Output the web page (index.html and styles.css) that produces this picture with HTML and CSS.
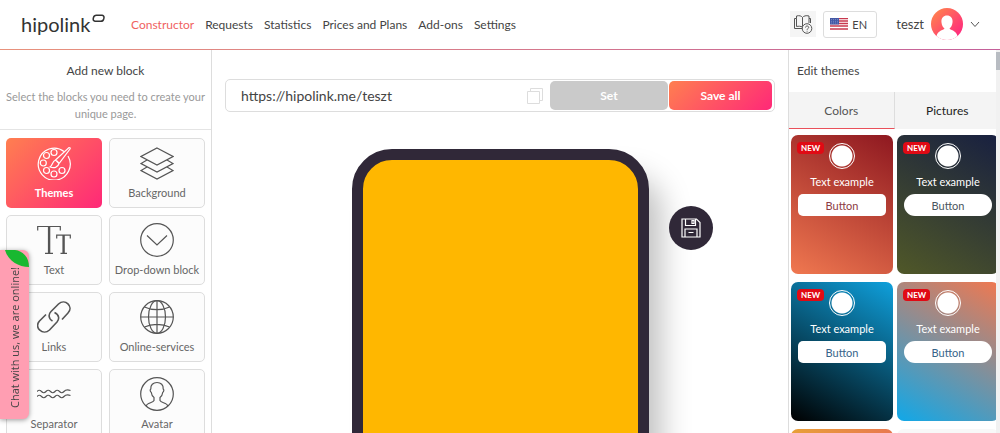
FILE: index.html
```html
<!DOCTYPE html>
<html lang="en">
<head>
    <meta charset="UTF-8">
    <meta name="viewport" content="width=device-width, initial-scale=1.0">
    <title>hipolink - Constructor</title>
    <link rel="stylesheet" href="styles.css">
</head>
<body>

    <header class="header">
        <a href="#" class="logo">hipolink
            <svg width="13" height="9" viewBox="0 0 13 9"><path d="M4.500 1.200H10a2 2 0 0 1 2 2.300l-.3 1.500a3 3 0 0 1-2.900 2.300H3.200a2 2 0 0 1-2-2.300l.3-1.500a3 3 0 0 1 3-2.300z"/></svg>
        </a>
        <nav class="nav">
            <a href="#" class="active">Constructor</a>
            <a href="#">Requests</a>
            <a href="#">Statistics</a>
            <a href="#">Prices and Plans</a>
            <a href="#">Add-ons</a>
            <a href="#">Settings</a>
        </nav>
        <div class="header-right">
            <button class="help" aria-label="Help">
                <svg width="20" height="20" viewBox="0 0 20 20">
                    <path d="M9.500 14.500H1.500V4.500h2V2c3-.8 5 0 6 1.500C10.500 2 13 1.200 16 2v2.500h1.500V9M9.500 3.500v9M3.500 4.500v8c2-.5 4-.3 6 .5M16 4.500V9"/>
                    <circle cx="14" cy="14.500" r="4.800"/>
                    <path d="M12.500 13.500c0-2 3.200-2 3.200 0 0 1.200-1.600 1-1.600 2.200M14.100 16.800v.8"/>
                </svg>
            </button>
            <button class="lang">
                <svg width="18" height="12" viewBox="0 0 18 12">
                    <rect width="18" height="12" fill="#fff"/>
                    <path d="M0 .5h18M0 3h18M0 5.500h18M0 8h18M0 11h18" stroke="#c8384e" stroke-width="1.300"/>
                    <rect width="9" height="6.500" fill="#4358a5"/>
                    <path d="M1 1.500h7M1 3.300h7M1 5h7" stroke="#99a5d2" stroke-width=".6" stroke-dasharray="1 1"/>
                </svg>
                EN
            </button>
            <button class="user">
                teszt
                <svg class="user-pic" width="32" height="32" viewBox="0 0 32 32">
                    <defs>
                        <linearGradient id="userBg" x1="0" y1="0" x2="1" y2="1">
                            <stop offset="0.150" stop-color="#ff7b51"/>
                            <stop offset="0.850" stop-color="#ff2c7c"/>
                        </linearGradient>
                    </defs>
                    <circle cx="16" cy="16" r="16" fill="url(#userBg)"/>
                    <path d="M16 7.500c4 0 6 3 5.500 7-.3 3-1.500 4.800-3 6 .3 1.500 6.500 1.500 8 7.500A16 16 0 0 1 5.500 28c1.500-6 7.700-6 8-7.500-1.500-1.200-2.700-3-3-6-.5-4 1.500-7 5.500-7z" fill="#fff"/>
                </svg>
                <svg width="10" height="7" viewBox="0 0 10 7"><path d="M1 1l4 4.500L9 1"/></svg>
            </button>
        </div>
    </header>

    <main class="layout">

        <!-- Blocks -->
        <aside class="blocks">
            <div class="blocks-head">
                <h2>Add new block</h2>
                <p>Select the blocks you need to create your unique page.</p>
            </div>
            <div class="blocks-grid">
                <button class="block selected">
                    <svg viewBox="0 0 34 34">
                        <path d="M27 5.500A16 16 0 1 0 31 10"/>
                        <circle cx="17" cy="6.500" r="3"/><circle cx="9.500" cy="9.500" r="3"/>
                        <circle cx="6.300" cy="17" r="3"/><circle cx="9.500" cy="24.500" r="3"/>
                        <circle cx="17" cy="28" r="3"/><circle cx="25" cy="24.500" r="3"/>
                        <path d="M18.500 14L32 1.500c1 0 1.500.5 1 1.500L22 17.500zM18.500 14c1.500.5 2.800 1.800 3.500 3.500-1 4-5 5-9 3.500 2.500-1 2-5.500 5.500-7z"/>
                    </svg>
                    Themes
                </button>
                <button class="block">
                    <svg viewBox="0 0 34 34">
                        <path d="M17 2l16 8.500L17 19 1 10.500zM7 14l-6 3.500L17 26l16-8.500-6-3.500M7 21l-6 3.500L17 33l16-8.500-6-3.500"/>
                    </svg>
                    Background
                </button>
                <button class="block">
                    <svg viewBox="0 0 34 34">
                        <path d="M.7 7.500V3.500h22.600v4M11.500 3.500V30M12.700 3.500V30M8 30.300h8M19.700 15.500v-3.300h13.600v3.300M26 12.200V30M27.200 12.200V30M23.500 30.300h6.500"/>
                    </svg>
                    Text
                </button>
                <button class="block">
                    <svg viewBox="0 0 34 34"><circle cx="17" cy="17" r="16.300"/><path d="M7 12.500L17 22l10-9.500"/></svg>
                    Drop-down block
                </button>
                <button class="block">
                    <svg viewBox="0 0 34 34" class="bold">
                        <path d="M15.500 21C11 18.500 11.500 14 14 11.500L21.500 4C28-2 37 6.500 31 13L25 19.500M17.500 12.500C22.500 15 22.500 19 20 22L12.500 30C6 36-3.500 27.500 2.500 21L9 14.500"/>
                    </svg>
                    Links
                </button>
                <button class="block">
                    <svg viewBox="0 0 34 34">
                        <circle cx="17" cy="17" r="16.300"/>
                        <ellipse cx="17" cy="17" rx="8.500" ry="16.300"/>
                        <path d="M17 .7v32.600M.7 17h32.600M4.500 7c7 3.500 18 3.500 25 0M4.500 27c7-3.500 18-3.500 25 0"/>
                    </svg>
                    Online-services
                </button>
                <button class="block">
                    <svg viewBox="0 0 34 34">
                        <path d="M0 14.500q2.200-2.500 4.500 0t4.500 0 4.500 0 4.500 0 4.500 0 4.500 0 6.500-1M0 19.500q2.200-2.500 4.500 0t4.500 0 4.500 0 4.500 0 4.500 0 4.500 0 6.500-1"/>
                    </svg>
                    Separator
                </button>
                <button class="block">
                    <svg viewBox="0 0 34 34">
                        <circle cx="17" cy="17" r="16.300"/>
                        <path d="M6 29c1-3.500 7-3 8-5.500v-3c-2-1.500-2.500-3-2.700-5-1.500-1-1.300-3-.5-3.500C10.500 8 13 5.500 17 5.500S23.500 8 23.200 12c.8.5 1 2.500-.5 3.500-.2 2-.7 3.500-2.700 5v3c1 2.500 7 2 8 5.500"/>
                    </svg>
                    Avatar
                </button>
            </div>
        </aside>

        <!-- Preview -->
        <section class="preview">
            <form class="url-bar">
                <input type="text" value="https://hipolink.me/teszt" aria-label="Page address">
                <button type="button" class="copy" aria-label="Copy">
                    <svg width="16" height="16" viewBox="0 0 16 16"><path d="M.5 3.500h12v12H.5zM3.500 3V.5h12v12H13"/></svg>
                </button>
                <button type="button" class="btn btn-set">Set</button>
                <button type="button" class="btn btn-save">Save all</button>
            </form>
            <div class="stage">
                <div class="phone"></div>
                <button class="save-round" aria-label="Save">
                    <svg width="20" height="20" viewBox="0 0 20 20">
                        <path d="M1 1h14.500L19 4.500V19H1zM4.500 1v6.500h10V1M11 2.500h2v3h-2zM4 19v-8h12v8M7.500 14.500h5"/>
                    </svg>
                </button>
            </div>
        </section>

        <!-- Themes -->
        <aside class="themes">
            <h2>Edit themes</h2>
            <div class="tabs">
                <button class="tab active">Colors</button>
                <button class="tab">Pictures</button>
            </div>
            <div class="themes-grid">
                <div class="theme theme-red">
                    <span class="new">NEW</span>
                    <span class="dot"></span>
                    <p>Text example</p>
                    <button>Button</button>
                </div>
                <div class="theme theme-green round">
                    <span class="new">NEW</span>
                    <span class="dot"></span>
                    <p>Text example</p>
                    <button>Button</button>
                </div>
                <div class="theme theme-blue">
                    <span class="new">NEW</span>
                    <span class="dot"></span>
                    <p>Text example</p>
                    <button>Button</button>
                </div>
                <div class="theme theme-sky round">
                    <span class="new">NEW</span>
                    <span class="dot"></span>
                    <p>Text example</p>
                    <button>Button</button>
                </div>
                <div class="theme theme-orange"></div>
                <div class="theme theme-light"></div>
            </div>
            <div class="scrollbar"></div>
        </aside>

    </main>

    <button class="chat">
        <svg width="24" height="17" viewBox="0 0 24 17"><path d="M0 0h10C18 1 24 7 24 17 14 17 3 11 0 0z"/></svg>
        <span>Chat with us, we are online!</span>
    </button>

</body>
</html>
```
FILE: styles.css
```css
* {
    box-sizing: border-box;
}

body {
    margin: 0;
    height: 100vh;
    display: flex;
    flex-direction: column;
    overflow: hidden;
    font-family: Lato, sans-serif;
    font-size: 12px;
    color: #444;
    background: #fff;
}

h2, p {
    margin: 0;
    font-weight: normal;
}

h2 {
    font-size: 12px;
    line-height: 16px;
}

a {
    color: inherit;
    text-decoration: none;
}

button {
    padding: 0;
    border: none;
    background: none;
    font: inherit;
    color: inherit;
    cursor: pointer;
}

svg {
    fill: none;
    stroke: #555;
    flex-shrink: 0;
}

/* Header */
.header {
    display: flex;
    align-items: center;
    height: 50px;
    flex-shrink: 0;
    padding: 0 20px 2px 21px;
    background: linear-gradient(90deg, #e8927c, #c4609a) bottom / 100% 1px no-repeat;
}

.logo {
    display: flex;
    align-items: center;
    gap: 2px;
    width: 110px;
    font-size: 20px;
    color: #333;
}

.logo svg {
    margin-bottom: 12px;
    stroke: #333;
    stroke-width: 1.5;
}

.nav {
    display: flex;
    gap: 11px;
}

.nav .active {
    color: #f0625f;
}

.header-right {
    display: flex;
    align-items: center;
    margin-left: auto;
}

.help {
    display: flex;
    align-items: center;
    justify-content: center;
    width: 26px;
    height: 26px;
    background: #f5f5f5;
}

.lang {
    display: flex;
    align-items: center;
    gap: 4px;
    width: 54px;
    height: 27px;
    margin: 0 19px 0 7px;
    padding-left: 6px;
    border: 1px solid #ddd;
    border-radius: 3px;
    font-size: 11px;
}

.lang svg,
.user-pic {
    stroke: none;
}

.user {
    display: flex;
    align-items: center;
    gap: 7px;
    font-size: 13px;
}

/* Layout */
.layout {
    flex: 1;
    display: grid;
    grid-template-columns: 212px 1fr 212px;
    grid-template-rows: 100%;
    min-height: 0;
}

.blocks {
    border-right: 1px solid #ddd;
    overflow: hidden;
}

.blocks-head {
    height: 80px;
    padding: 13px 4px 0;
    border-bottom: 1px solid #e4e4e4;
    text-align: center;
}

.blocks-head p {
    margin-top: 9px;
    font-size: 11px;
    line-height: 17px;
    color: #999;
}

.blocks-grid {
    display: grid;
    grid-template-columns: 1fr 1fr;
    gap: 7px;
    padding: 8px 6px;
}

.block {
    display: flex;
    flex-direction: column;
    align-items: center;
    gap: 5px;
    height: 70px;
    padding-top: 7px;
    border: 1px solid #ddd;
    border-radius: 5px;
    background: #fcfcfc;
    font-size: 11px;
    line-height: 16px;
    color: #666;
    white-space: nowrap;
}

.block svg {
    width: 34px;
    height: 34px;
    stroke-width: 1.2;
}

.block svg.bold {
    stroke-width: 1.6;
}

.block.selected {
    border-color: transparent;
    background: linear-gradient(135deg, #ff7f50, #ff2878) border-box;
    color: #fff;
    font-weight: bold;
}

.block.selected svg {
    stroke: #fff;
}

/* Preview */
.preview {
    display: flex;
    flex-direction: column;
    padding: 29px 13px 0;
    min-width: 0;
    overflow: hidden;
}

.url-bar {
    display: flex;
    align-items: center;
    height: 33px;
    flex-shrink: 0;
    padding: 0 2px 0 15px;
    border: 1px solid #ddd;
    border-radius: 5px;
}

.url-bar input {
    flex: 1;
    min-width: 0;
    padding: 0;
    border: none;
    outline: none;
    font: inherit;
    font-size: 14px;
    color: #444;
}

.copy {
    display: flex;
    margin-right: 7px;
}

.copy svg {
    stroke: #ddd;
}

.btn {
    height: 29px;
    border-radius: 5px;
    color: #fff;
    font-weight: bold;
}

.btn-set {
    width: 118px;
    margin-right: 1px;
    background: #cacaca;
}

.btn-save {
    width: 103px;
    background: linear-gradient(135deg, #ff7f50, #ff2878);
}

.stage {
    flex: 1;
    display: grid;
    grid-template-columns: 1fr 297px 1fr;
    margin-top: 37px;
    min-height: 0;
}

.phone {
    grid-column: 2;
    height: 600px;
    border: 11px solid #302838;
    border-radius: 40px;
    background: #ffb700;
    box-shadow: 20px 20px 30px -8px rgba(0, 0, 0, 0.25);
}

.save-round {
    display: flex;
    align-items: center;
    justify-content: center;
    width: 44px;
    height: 44px;
    margin: 57px 0 0 20px;
    border-radius: 50%;
    background: #302838;
    z-index: 1;
}

.save-round svg {
    stroke: #fff;
    stroke-width: 1.2;
}

/* Themes */
.themes {
    position: relative;
    border-left: 1px solid #ddd;
    overflow: hidden;
}

.themes h2 {
    padding: 13px 8px;
}

.tabs {
    display: grid;
    grid-template-columns: 1fr 1fr;
    height: 37px;
    background: #f4f4f4;
}

.tab {
    border-bottom: 1px solid transparent;
    color: #222;
}

.tab.active {
    border-right: 1px solid #ddd;
    border-bottom-color: #e9505a;
    color: #555;
}

.themes-grid {
    display: grid;
    grid-template-columns: 102px 102px;
    gap: 8px 4px;
    padding: 6px 2px;
}

.theme {
    position: relative;
    display: flex;
    flex-direction: column;
    align-items: center;
    height: 139px;
    padding: 8px 7px;
    border-radius: 7px;
    color: #fff;
}

.theme p {
    margin: 5px 0 4px;
    font-size: 11px;
    line-height: 16px;
}

.theme button {
    width: 100%;
    height: 22px;
    border-radius: 5px;
    background: #fff;
    font-size: 11px;
    color: #8d3c44;
}

.theme.round button {
    border-radius: 11px;
    color: #4a5560;
}

.dot {
    width: 26px;
    height: 26px;
    border: 1px solid #fff;
    border-radius: 50%;
    background: radial-gradient(#fff 10px, transparent 11px);
}

.new {
    position: absolute;
    top: 7px;
    left: 6px;
    padding: 0 4px;
    border-radius: 4px;
    background: #e00a14;
    font-size: 8px;
    font-weight: bold;
    line-height: 12px;
}

.theme-red {
    background: linear-gradient(30deg, #f07850, #8e1820);
}

.theme-green {
    background: linear-gradient(30deg, #505828, #182040);
}

.theme-blue {
    background: linear-gradient(30deg, #000, #0fa0dc);
}

.theme-sky {
    background: linear-gradient(30deg, #10a8e8, #f07850);
}

.theme-blue button,
.theme-sky.round button {
    color: #37648a;
}

.theme-orange {
    background: linear-gradient(90deg, #e8a038, #e87850);
}

.theme-light {
    background: #f8f8f8;
}

.scrollbar {
    position: absolute;
    top: 0;
    right: 0;
    width: 4px;
    height: 100%;
    background: linear-gradient(#b8bcc2, #b8bcc2) 0 2px / 4px 18px no-repeat #f1f1f1;
}

/* Chat */
.chat {
    position: fixed;
    top: 250px;
    left: 0;
    display: flex;
    align-items: flex-end;
    justify-content: center;
    width: 29px;
    height: 169px;
    padding-bottom: 11px;
    border-radius: 0 6px 6px 0;
    background: #ff9eb2;
    box-shadow: 0 1px 5px rgba(0, 0, 0, 0.4);
    font-family: "Open Sans", sans-serif;
    font-size: 11px;
    color: #444;
}

.chat svg {
    position: absolute;
    top: 0;
    right: 0;
    fill: #18b830;
    stroke: none;
}

.chat span {
    writing-mode: vertical-rl;
    transform: rotate(180deg);
    white-space: nowrap;
}
```
